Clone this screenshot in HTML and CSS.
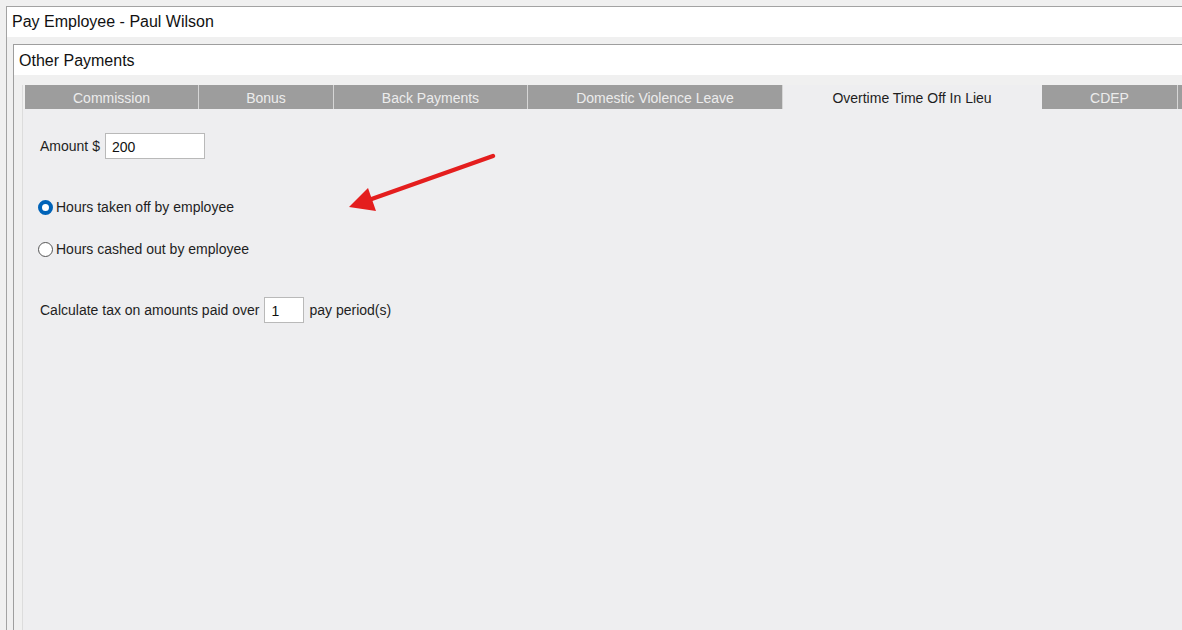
FILE: index.html
```html
<!DOCTYPE html>
<html lang="en">
<head>
    <meta charset="UTF-8">
    <title>Pay Employee - Paul Wilson</title>
    <link rel="stylesheet" href="styles.css">
</head>
<body>

    <div class="window">
        <div class="title-bar">Pay Employee - Paul Wilson</div>
        <div class="window-body">
            <div class="group">
                <div class="group-header">Other Payments</div>
                <div class="tab-control">
                    <div class="tab-strip">
                        <div class="tab tab-commission">Commission</div>
                        <div class="tab tab-bonus">Bonus</div>
                        <div class="tab tab-back">Back Payments</div>
                        <div class="tab tab-dvl">Domestic Violence Leave</div>
                        <div class="tab tab-toil active">Overtime Time Off In Lieu</div>
                        <div class="tab tab-cdep">CDEP</div>
                        <div class="tab tab-more"></div>
                    </div>
                    <div class="tab-page">
                        <div class="field-row amount-row">
                            <label for="amount">Amount $</label>
                            <input type="text" id="amount" class="text-box amount-box" value="200">
                        </div>

                        <label class="radio-row first-radio">
                            <span class="radio checked"></span>
                            <span>Hours taken off by employee</span>
                        </label>
                        <label class="radio-row second-radio">
                            <span class="radio"></span>
                            <span>Hours cashed out by employee</span>
                        </label>

                        <div class="field-row tax-row">
                            <label for="periods">Calculate tax on amounts paid over</label>
                            <input type="text" id="periods" class="text-box period-box" value="1">
                            <span>pay period(s)</span>
                        </div>
                    </div>
                </div>
            </div>
        </div>
    </div>

    <!-- callout arrow drawn over the form -->
    <svg class="callout" width="1182" height="630" viewBox="0 0 1182 630">
        <line x1="493" y1="156" x2="366" y2="201" stroke="#e41e1e" stroke-width="4.5" stroke-linecap="round"/>
        <polygon points="349,207 368,188 376,211" fill="#e41e1e"/>
    </svg>

</body>
</html>
```

FILE: styles.css
```css
/* Windows-style form */
html, body {
    margin: 0;
    padding: 0;
    width: 100%;
    height: 100%;
    overflow: hidden;
}
body {
    font-family: "Liberation Sans", Arial, sans-serif;
    font-size: 14px;
    color: #1e1e1e;
    background-color: #f0f0f0;
    position: relative;
}
.window {
    box-sizing: border-box;
    margin: 6px 0 0 6px;
    width: calc(100% - 6px);
    height: calc(100% - 6px);
    border-left: 1px solid #a3a3a3;
    border-top: 1px solid #a3a3a3;
    display: flex;
    flex-direction: column;
}
.title-bar {
    flex: none;
    height: 30px;
    line-height: 29px;
    padding-left: 5px;
    background-color: #fff;
    font-size: 16px;
    color: #111;
}
.window-body {
    flex: 1;
    min-height: 0;
    padding: 7px 0 0 6px;
    display: flex;
    flex-direction: column;
}
.group {
    flex: 1;
    min-height: 0;
    border-left: 1px solid #9e9e9e;
    border-top: 1px solid #9e9e9e;
    display: flex;
    flex-direction: column;
}
.group-header {
    flex: none;
    height: 30px;
    line-height: 31px;
    padding-left: 5px;
    background-color: #fff;
    font-size: 16px;
    color: #111;
}
.tab-control {
    flex: 1;
    min-height: 0;
    margin: 10px 0 0 8px;
    border-left: 1px solid #dcdcdc;
    display: flex;
    flex-direction: column;
    overflow: hidden;
}
.tab-strip {
    flex: none;
    display: flex;
    height: 24px;
    padding-left: 2px;
}
.tab {
    box-sizing: border-box;
    flex: none;
    height: 24px;
    line-height: 26px;
    text-align: center;
    background-color: #9d9d9d;
    color: #ececec;
    border-right: 1px solid #d6d6d6;
}
.tab.active {
    background-color: #eeeef0;
    color: #1e1e1e;
}
.tab-commission { width: 174px; }
.tab-bonus { width: 135px; }
.tab-back { width: 194px; }
.tab-dvl { width: 255px; }
.tab-toil { width: 259px; border-right-color: #eeeef0; }
.tab-cdep { width: 136px; }
.tab-more { flex: 1; border-right: none; }
.tab-page {
    flex: 1;
    background-color: #eeeef0;
    padding-left: 17px;
    display: flex;
    flex-direction: column;
    align-items: flex-start;
}
.field-row {
    display: flex;
    align-items: center;
    gap: 5px;
}
.amount-row {
    margin-top: 24px;
}
.text-box {
    box-sizing: border-box;
    height: 26px;
    border: 1px solid #b9b9b9;
    background-color: #fff;
    font-family: "Liberation Sans", Arial, sans-serif;
    font-size: 14px;
    color: #111;
    padding: 2px 6px 0;
    margin: 0;
    outline: none;
}
.amount-box {
    width: 100px;
}
.radio-row {
    display: flex;
    align-items: center;
    gap: 3px;
    margin-left: -2px;
    height: 20px;
}
.first-radio {
    margin-top: 38px;
}
.second-radio {
    margin-top: 22px;
}
.radio {
    box-sizing: border-box;
    width: 15px;
    height: 15px;
    border-radius: 50%;
    border: 1px solid #555;
    background-color: #fff;
}
.radio.checked {
    border: 4px solid #0063b8;
    background-color: #fff;
}
.tax-row {
    margin-top: 38px;
}
.period-box {
    width: 40px;
}
.callout {
    position: absolute;
    left: 0;
    top: 0;
    pointer-events: none;
}
```
